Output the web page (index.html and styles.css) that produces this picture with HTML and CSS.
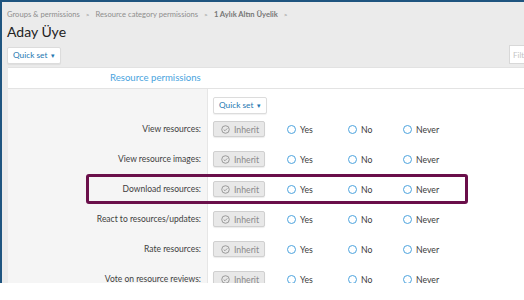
FILE: index.html
```html
<!DOCTYPE html>
<html>
<head>
<meta charset="utf-8">
<link rel="stylesheet" href="styles.css">
</head>
<body>
<div class="frame">
  <div class="crumbs">
    <span>Groups &amp; permissions</span><span class="sep">&gt;</span>
    <span>Resource category permissions</span><span class="sep">&gt;</span>
    <span class="cur">1 Aylık Altın Üyelik</span><span class="sep">&gt;</span>
  </div>
  <h1 class="title">Aday Üye</h1>
  <div class="toolbar">
    <button class="qs">Quick set <span class="caret">▾</span></button>
    <div class="filter">Filter</div>
  </div>
  <div class="panel">
    <div class="panel-head">Resource permissions</div>
    <div class="rows">
      <div class="row row-top">
        <div class="lbl"></div>
        <div class="ctl"><button class="qs">Quick set <span class="caret">▾</span></button></div>
      </div>
      <div class="row">
        <div class="lbl">View resources:</div>
        <div class="ctl">
          <span class="inherit"><svg class="ico" viewBox="0 0 10 10"><circle cx="5" cy="5" r="4.2" fill="none" stroke="#8a8a8a" stroke-width="0.9"/><path d="M3 5.1 L4.4 6.4 L7 3.8" fill="none" stroke="#8a8a8a" stroke-width="0.9"/></svg>Inherit</span>
          <span class="opt yes"><i></i>Yes</span><span class="opt no"><i></i>No</span><span class="opt"><i></i>Never</span>
        </div>
      </div>
      <div class="row">
        <div class="lbl">View resource images:</div>
        <div class="ctl">
          <span class="inherit"><svg class="ico" viewBox="0 0 10 10"><circle cx="5" cy="5" r="4.2" fill="none" stroke="#8a8a8a" stroke-width="0.9"/><path d="M3 5.1 L4.4 6.4 L7 3.8" fill="none" stroke="#8a8a8a" stroke-width="0.9"/></svg>Inherit</span>
          <span class="opt yes"><i></i>Yes</span><span class="opt no"><i></i>No</span><span class="opt"><i></i>Never</span>
        </div>
      </div>
      <div class="row hl-row">
        <div class="lbl">Download resources:</div>
        <div class="ctl">
          <span class="inherit"><svg class="ico" viewBox="0 0 10 10"><circle cx="5" cy="5" r="4.2" fill="none" stroke="#8a8a8a" stroke-width="0.9"/><path d="M3 5.1 L4.4 6.4 L7 3.8" fill="none" stroke="#8a8a8a" stroke-width="0.9"/></svg>Inherit</span>
          <span class="opt yes"><i></i>Yes</span><span class="opt no"><i></i>No</span><span class="opt"><i></i>Never</span>
        </div>
        <div class="highlight"></div>
      </div>
      <div class="row">
        <div class="lbl">React to resources/updates:</div>
        <div class="ctl">
          <span class="inherit"><svg class="ico" viewBox="0 0 10 10"><circle cx="5" cy="5" r="4.2" fill="none" stroke="#8a8a8a" stroke-width="0.9"/><path d="M3 5.1 L4.4 6.4 L7 3.8" fill="none" stroke="#8a8a8a" stroke-width="0.9"/></svg>Inherit</span>
          <span class="opt yes"><i></i>Yes</span><span class="opt no"><i></i>No</span><span class="opt"><i></i>Never</span>
        </div>
      </div>
      <div class="row">
        <div class="lbl">Rate resources:</div>
        <div class="ctl">
          <span class="inherit"><svg class="ico" viewBox="0 0 10 10"><circle cx="5" cy="5" r="4.2" fill="none" stroke="#8a8a8a" stroke-width="0.9"/><path d="M3 5.1 L4.4 6.4 L7 3.8" fill="none" stroke="#8a8a8a" stroke-width="0.9"/></svg>Inherit</span>
          <span class="opt yes"><i></i>Yes</span><span class="opt no"><i></i>No</span><span class="opt"><i></i>Never</span>
        </div>
      </div>
      <div class="row">
        <div class="lbl">Vote on resource reviews:</div>
        <div class="ctl">
          <span class="inherit"><svg class="ico" viewBox="0 0 10 10"><circle cx="5" cy="5" r="4.2" fill="none" stroke="#8a8a8a" stroke-width="0.9"/><path d="M3 5.1 L4.4 6.4 L7 3.8" fill="none" stroke="#8a8a8a" stroke-width="0.9"/></svg>Inherit</span>
          <span class="opt yes"><i></i>Yes</span><span class="opt no"><i></i>No</span><span class="opt"><i></i>Never</span>
        </div>
      </div>
    </div>
  </div>
</div>
</body>
</html>
```
FILE: styles.css
```css
* { box-sizing: border-box; }
html, body { margin: 0; padding: 0; background: #ffffff; }
body { font-family: Lato, "Open Sans", sans-serif; color: #2b2b2b; }

.frame {
  height: 283px;
  overflow: hidden;
  background: #ebebeb;
  border-top: 2px solid #1f5580;
  border-left: 2px solid #1f5580;
  padding-left: 5px;
}

.crumbs {
  display: flex;
  align-items: center;
  height: 12px;
  margin-top: 6px;
  font-size: 7.6px;
  color: #8e8e8e;
  white-space: nowrap;
}
.crumbs .sep { margin: 0 6px; font-size: 6.5px; }
.crumbs .cur { font-weight: bold; color: #777; }

.title {
  margin: 2px 0 0 0;
  font-size: 14px;
  font-weight: normal;
  line-height: 20px;
  height: 20px;
  color: #222;
}

.toolbar {
  display: flex;
  justify-content: space-between;
  align-items: flex-start;
  margin-top: 5px;
  height: 20px;
}

.qs {
  font-family: inherit;
  height: 17px;
  padding: 0 5px;
  font-size: 8.3px;
  line-height: 15px;
  color: #2577b1;
  background: #fff;
  border: 1px solid #dcdcdc;
  border-radius: 2px;
  box-shadow: 0 1px 1px rgba(0,0,0,0.06);
}
.qs .caret { font-size: 6.5px; margin-left: 1px; }

.filter {
  width: 40px;
  height: 19px;
  margin-right: -25px;
  margin-top: -2px;
  background: #fff;
  border: 1px solid #d8d8d8;
  font-size: 8px;
  color: #c4c4c4;
  padding: 4px 3px;
}

.panel {
  background: #fff;
  border-top: 1px solid #e2e2e2;
  height: 220px;
  margin-left: 1px;
}

.panel-head {
  height: 21px;
  border-bottom: 1px solid #e3e3e3;
  padding-left: 102px;
  font-size: 9.6px;
  line-height: 20px;
  color: #4aa4de;
}

.rows {
  background: linear-gradient(to right, #f5f5f5 0, #f5f5f5 199px, #e6e6e6 199px, #e6e6e6 200px, #fff 200px);
  height: 200px;
  padding-top: 8px;
}

.row {
  position: relative;
  display: grid;
  grid-template-columns: 200px 1fr;
  align-items: center;
  height: 30px;
}
.row-top { height: 17px; align-items: start; }

.lbl {
  text-align: right;
  padding-right: 7px;
  font-size: 8.5px;
  color: #404040;
  white-space: nowrap;
}

.ctl {
  display: flex;
  align-items: center;
  padding-left: 5px;
  font-size: 8.7px;
  color: #3c3c3c;
  white-space: nowrap;
}

.inherit {
  display: inline-flex;
  align-items: center;
  width: 52px;
  height: 16px;
  margin-right: 22px;
  padding-left: 7px;
  background: #e8e8e8;
  border: 1px solid #d0d0d0;
  border-radius: 2px;
  box-shadow: 0 1px 1px rgba(0,0,0,0.08);
  color: #8a8a8a;
  font-size: 8.7px;
}
.inherit .ico { width: 9px; height: 9px; margin-right: 4px; }

.opt { display: inline-flex; align-items: center; }
.opt.yes { width: 61px; }
.opt.no { width: 55px; }
.opt i {
  display: inline-block;
  width: 9px;
  height: 9px;
  border: 1px solid #4ca3de;
  border-radius: 50%;
  background: #fff;
  margin-right: 4px;
}

.highlight {
  position: absolute;
  left: 78px;
  top: 0;
  width: 382px;
  height: 30px;
  border: 3px solid #6a0f4a;
  border-radius: 3px;
  pointer-events: none;
}
```
